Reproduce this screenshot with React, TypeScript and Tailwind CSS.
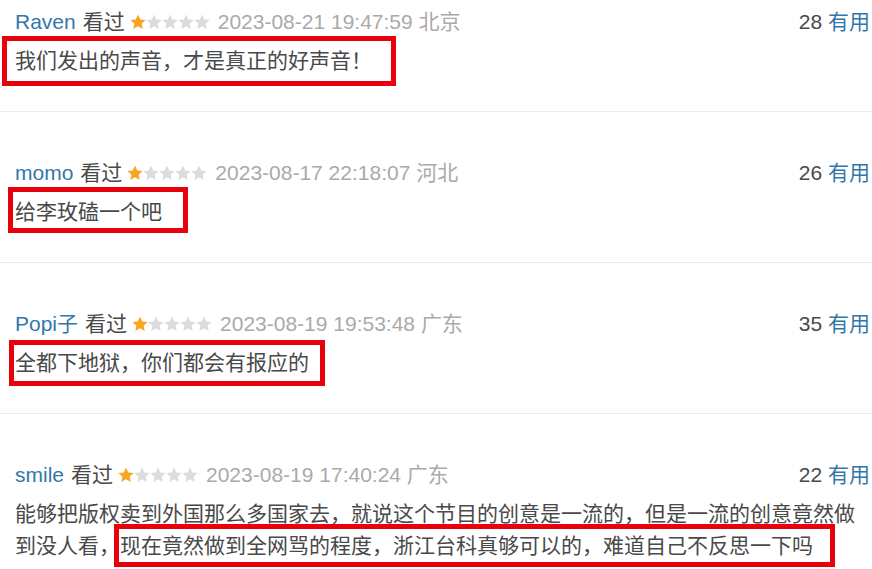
const comments = [
  {
    name: "Raven",
    time: "2023-08-21 19:47:59",
    place: "北京",
    votes: 28,
    lines: ["我们发出的声音，才是真正的好声音！"],
    box: "top-[-9px] left-[-13px] w-[394px] h-[50px]",
    first: true,
  },
  {
    name: "momo",
    time: "2023-08-17 22:18:07",
    place: "河北",
    votes: 26,
    lines: ["给李玫磕一个吧"],
    box: "top-[-9px] left-[-7px] w-[180px] h-[46px]",
  },
  {
    name: "Popi子",
    time: "2023-08-19 19:53:48",
    place: "广东",
    votes: 35,
    lines: ["全都下地狱，你们都会有报应的"],
    box: "top-[-7px] left-[-6px] w-[316px] h-[46px]",
  },
  {
    name: "smile",
    time: "2023-08-19 17:40:24",
    place: "广东",
    votes: 22,
    lines: [
      "能够把版权卖到外国那么多国家去，就说这个节目的创意是一流的，但是一流的创意竟然做到没人看，现在竟然做到全网骂的程度，浙江台科真够可以的，难道自己不反思一下吗",
    ],
    box: "top-[26px] left-[99px] w-[721px] h-[43px]",
  },
];

const Star = ({ on }: { on: boolean }) => (
  <svg width="16" height="16" viewBox="0 0 24 24" className="shrink-0">
    <path
      d="M12 0.8l3.4 7.3 8 .9-6 5.5 1.7 7.9L12 18.4l-7.1 4 1.7-7.9-6-5.5 8-.9z"
      fill={on ? "#f6a623" : "#dcdcdc"}
    />
  </svg>
);

const App = () => {
  return (
    <div
      className="w-[872px] h-[569px] overflow-hidden bg-white text-[21px] text-[#494949]"
      style={{ fontFamily: '"Liberation Sans", Arial, "Noto Sans CJK SC", sans-serif' }}
    >
      {comments.map((c, i) => (
        <div
          key={i}
          className={`pl-[15px] pr-[2px] pb-[34px] border-b border-[#ececec] ${
            c.first ? "pt-[7px]" : "pt-[46px]"
          }`}
        >
          <div className="flex items-center justify-between h-[30px] whitespace-nowrap">
            <div className="flex items-center">
              <span className="text-[#3377aa]">{c.name}</span>
              <span className="ml-[7px]">看过</span>
              <span className="flex items-center ml-[5px]">
                <Star on />
                <Star on={false} />
                <Star on={false} />
                <Star on={false} />
                <Star on={false} />
              </span>
              <span className="ml-[8px] text-[#aaaaaa]">
                {c.time} {c.place}
              </span>
            </div>
            <div>
              {c.votes} <span className="text-[#3377aa]">有用</span>
            </div>
          </div>
          <div className="relative mt-[8px] leading-[32px]">
            {c.lines.map((l, j) => (
              <p key={j}>{l}</p>
            ))}
            {/* red annotation box */}
            <div className={`absolute border-[5px] border-[#e8000b] pointer-events-none ${c.box}`} />
          </div>
        </div>
      ))}
    </div>
  );
};

export default App;
